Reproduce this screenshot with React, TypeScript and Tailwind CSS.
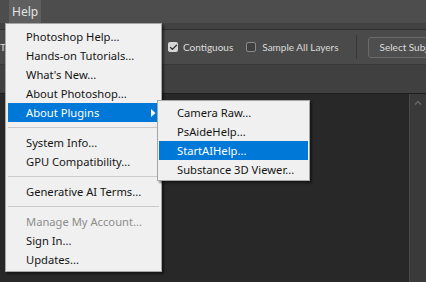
import { Check } from "lucide-react";

const font = { fontFamily: '"Noto Sans", "Open Sans", sans-serif' };
const barFont = { fontFamily: 'Lato, "Noto Sans", sans-serif' };

type Entry = { label: string; disabled?: boolean; active?: boolean; sub?: boolean } | "sep";

const helpItems: Entry[] = [
  { label: "Photoshop Help..." },
  { label: "Hands-on Tutorials..." },
  { label: "What's New..." },
  { label: "About Photoshop..." },
  { label: "About Plugins", active: true, sub: true },
  "sep",
  { label: "System Info..." },
  { label: "GPU Compatibility..." },
  "sep",
  { label: "Generative AI Terms..." },
  "sep",
  { label: "Manage My Account...", disabled: true },
  { label: "Sign In..." },
  { label: "Updates..." },
];

const pluginItems = ["Camera Raw...", "PsAideHelp...", "StartAIHelp...", "Substance 3D Viewer..."];

function MenuRow({ label, active, disabled, sub, mx }: { label: string; active?: boolean; disabled?: boolean; sub?: boolean; mx: string }) {
  return (
    <div
      className={`relative flex h-[19px] items-center whitespace-nowrap pl-[18px] text-[11.2px] leading-none ${mx} ${
        active ? "bg-[#0078d7] text-white" : disabled ? "text-[#8d8d8d]" : "text-[#141414]"
      }`}
    >
      {label}
      {sub && (
        <svg className="absolute right-[3px] top-[6px]" width="5" height="8" viewBox="0 0 5 8">
          <path d="M0 0 L4.5 4 L0 8 Z" fill={active ? "#ffffff" : "#141414"} />
        </svg>
      )}
    </div>
  );
}

export default function App() {
  return (
    <div className="relative flex h-[282px] w-[426px] flex-col overflow-hidden bg-[#282828]" style={font}>
      {/* menu bar */}
      <div className="flex h-[23px] items-stretch bg-[#4d4d4d] pl-[9px]">
        <div className="flex items-center bg-[#5f5f5f] px-[3px] text-[12px] text-[#e4e4e4]">Help</div>
      </div>
      <div className="h-[7px] border-b border-[#2f2f2f] bg-[#424242]" />

      {/* options bar */}
      <div className="flex h-[34px] items-center whitespace-nowrap bg-[#4a4a4a] text-[10px] text-[#dcdcdc]" style={barFont}>
        <div className="w-[168px] shrink-0">
          <div className="w-[5px] overflow-hidden">To</div>
        </div>
        <div className="flex shrink-0 items-center gap-[5px]">
          <div className="flex h-[10px] w-[10px] items-center justify-center rounded-[2px] bg-[#d6d6d6]">
            <Check size={9} strokeWidth={3.5} color="#333333" />
          </div>
          <span>Contiguous</span>
        </div>
        <div className="ml-[13px] flex shrink-0 items-center gap-[6px]">
          <div className="h-[10px] w-[10px] rounded-[2px] border border-[#8a8a8a] bg-[#404040]" />
          <span>Sample All Layers</span>
        </div>
        <div className="ml-[17px] h-[24px] w-px shrink-0 bg-[#383838]" />
        <div className="ml-[11px] flex h-[21px] shrink-0 items-center rounded-[3px] border border-[#6a6a6a] bg-[#4e4e4e] pl-[11px] pr-[8px]">
          Select Subject
        </div>
      </div>

      {/* tab bar */}
      <div className="h-[29px] border-t border-[#393939] bg-[#404040]" />

      {/* canvas */}
      <div className="flex flex-1 border-t border-[#1e1e1e]">
        <div className="flex-1 bg-[#282828]" />
        <div className="flex w-[17px] justify-center border-l border-[#4a4a4a] bg-[#3a3a3a] pt-[6px]">
          <svg width="8" height="5" viewBox="0 0 8 5">
            <path d="M1 4.5 L4 1.5 L7 4.5" stroke="#6c6c6c" strokeWidth="1.2" fill="none" />
          </svg>
        </div>
      </div>

      {/* Help menu */}
      <div className="absolute left-[5px] top-[23px] w-[157px] border border-[#a6a6a6] bg-[#f0f0f0] pt-[3px] pb-[2px] shadow-[2px_2px_2px_rgba(0,0,0,0.45)]">
        {helpItems.map((it, i) =>
          it === "sep" ? (
            <div key={i} className="flex h-[11px] items-center px-[2px]">
              <div className="h-px w-full bg-[#cacaca]" />
            </div>
          ) : (
            <MenuRow key={i} mx="mx-[2px]" {...it} />
          )
        )}
      </div>

      {/* About Plugins submenu */}
      <div className="absolute left-[157px] top-[100px] w-[153px] border border-[#a6a6a6] bg-[#f0f0f0] pt-[2px] pb-[1px] shadow-[2px_2px_2px_rgba(0,0,0,0.45)]">
        {pluginItems.map((label) => (
          <MenuRow key={label} mx="mx-[1px]" label={label} active={label === "StartAIHelp..."} />
        ))}
      </div>
    </div>
  );
}
